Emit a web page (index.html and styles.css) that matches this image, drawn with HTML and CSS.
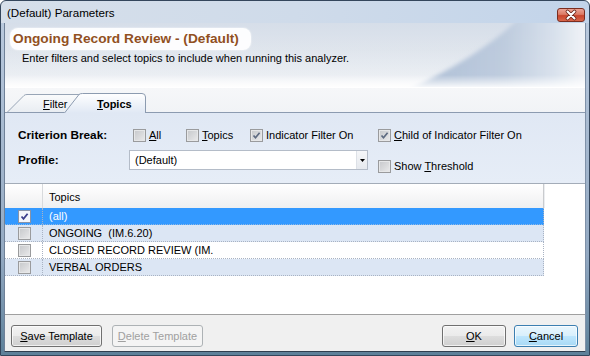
FILE: index.html
```html
<!DOCTYPE html>
<html>
<head>
<meta charset="utf-8">
<title>(Default) Parameters</title>
<link rel="stylesheet" href="styles.css">
</head>
<body>
<div class="window">
  <div class="titlebar">
    <span class="title">(Default) Parameters</span>
    <span class="close">
      <svg width="28" height="14" viewBox="0 0 28 14">
        <path d="M10.5,3.5 L17.5,10.5 M17.5,3.5 L10.5,10.5" stroke="#6a2418" stroke-width="3.8" stroke-linecap="round"/>
        <path d="M10.5,3.5 L17.5,10.5 M17.5,3.5 L10.5,10.5" stroke="#ffffff" stroke-width="2.1" stroke-linecap="round"/>
      </svg>
    </span>
  </div>
  <div class="frame">
    <div class="client">
      <div class="header">
        <svg class="swoosh" width="580" height="65" viewBox="0 0 580 65">
          <defs>
            <linearGradient id="sw" gradientUnits="userSpaceOnUse" x1="430" y1="0" x2="580" y2="0">
              <stop offset="0" stop-color="#aebfd6"/>
              <stop offset="0.45" stop-color="#bccadd"/>
              <stop offset="0.8" stop-color="#d8e1ec"/>
              <stop offset="1" stop-color="#f0f3f7"/>
            </linearGradient>
            <linearGradient id="fade" x1="0" y1="0" x2="0" y2="1">
              <stop offset="0" stop-color="#ffffff" stop-opacity="0"/>
              <stop offset="0.8" stop-color="#ffffff" stop-opacity="0.05"/>
              <stop offset="1" stop-color="#ffffff" stop-opacity="0.95"/>
            </linearGradient>
            <filter id="soft" filterUnits="userSpaceOnUse" x="380" y="-10" width="220" height="90">
              <feGaussianBlur stdDeviation="2"/>
            </filter>
          </defs>
          <path d="M402,68 C447,46 487,22 513,-4 L600,-4 L600,68 Z" fill="url(#sw)" filter="url(#soft)"/>
          <rect x="0" y="0" width="580" height="65" fill="url(#fade)"/>
        </svg>
        <div class="pill">Ongoing Record Review - (Default)</div>
        <div class="desc">Enter filters and select topics to include when running this analyzer.</div>
      </div>
      <div class="tabstrip">
        <div class="tab tab-filter">
          <svg class="tabshape" width="73" height="18" viewBox="0 0 73 18">
            <defs>
              <linearGradient id="tf" x1="0" y1="0" x2="0" y2="1">
                <stop offset="0" stop-color="#fafbfc"/>
                <stop offset="1" stop-color="#e9edf2"/>
              </linearGradient>
            </defs>
            <path d="M0,18 L17,1.5 Q18,0.5 20,0.5 L73,0.5 L73,18 Z" fill="url(#tf)"/>
            <path d="M0.5,18 L17,1.5 Q18,0.5 20,0.5 L73,0.5" fill="none" stroke="#98a5b6"/>
          </svg>
          <span class="tablabel"><u>F</u>ilter</span>
        </div>
        <div class="tab tab-topics">
          <svg class="tabshape" width="82" height="20" viewBox="0 0 82 20">
            <defs>
              <linearGradient id="tt" x1="0" y1="0" x2="0" y2="1">
                <stop offset="0" stop-color="#ffffff"/>
                <stop offset="1" stop-color="#e0e8f4"/>
              </linearGradient>
            </defs>
            <path d="M0,20 L15,1.5 Q16,0.5 18.5,0.5 L78,0.5 Q81.5,0.5 81.5,4 L81.5,20 Z" fill="url(#tt)"/>
            <path d="M0.5,20 L15,1.5 Q16,0.5 18.5,0.5 L78,0.5 Q81.5,0.5 81.5,4 L81.5,20" fill="none" stroke="#8c9bb0"/>
          </svg>
          <span class="tablabel bold"><u>T</u>opics</span>
        </div>
      </div>
      <div class="filters">
        <div class="flabel">Criterion Break:</div>
        <div class="fmid">
          <span class="cbitem w-all"><span class="cb"></span><span><u>A</u>ll</span></span>
          <span class="cbitem w-topics"><span class="cb"></span><span><u>T</u>opics</span></span>
          <span class="cbitem"><span class="cb"><svg width="11" height="11" viewBox="0 0 11 11"><path d="M2.5,5.5 L4.5,7.8 L8.6,2.8" fill="none" stroke="#5d6a80" stroke-width="1.7"/></svg></span><span>Indicator Filter On</span></span>
        </div>
        <div class="fright">
          <span class="cbitem"><span class="cb"><svg width="11" height="11" viewBox="0 0 11 11"><path d="M2.5,5.5 L4.5,7.8 L8.6,2.8" fill="none" stroke="#5d6a80" stroke-width="1.7"/></svg></span><span><u>C</u>hild of Indicator Filter On</span></span>
        </div>
        <div class="flabel">Profile:</div>
        <div class="fmid">
          <div class="combo">
            <span class="combotext">(Default)</span>
            <span class="combobtn"><svg width="5" height="3" viewBox="0 0 5 3"><path d="M0,0 L5,0 L2.5,3 Z" fill="#000"/></svg></span>
          </div>
        </div>
        <div class="fright low">
          <span class="cbitem"><span class="cb"></span><span>Show <u>T</u>hreshold</span></span>
        </div>
      </div>
      <div class="grid">
        <div class="ghead">
          <div class="gc1"></div>
          <div class="gc2">Topics</div>
        </div>
        <div class="grow sel">
          <div class="gc1"><span class="cb white"><svg width="11" height="11" viewBox="0 0 11 11"><path d="M2.5,5.5 L4.5,7.8 L8.6,2.8" fill="none" stroke="#3d3f8c" stroke-width="1.8"/></svg></span></div>
          <div class="gc2">(all)</div>
        </div>
        <div class="grow alt">
          <div class="gc1"><span class="cb"></span></div>
          <div class="gc2">ONGOING&nbsp; (IM.6.20)</div>
        </div>
        <div class="grow">
          <div class="gc1"><span class="cb"></span></div>
          <div class="gc2">CLOSED RECORD REVIEW (IM.</div>
        </div>
        <div class="grow alt">
          <div class="gc1"><span class="cb"></span></div>
          <div class="gc2">VERBAL ORDERS</div>
        </div>
      </div>
      <div class="footer">
        <button class="btn wide"><u>S</u>ave Template</button>
        <button class="btn wide disabled"><u>D</u>elete Template</button>
        <span class="spacer"></span>
        <button class="btn small"><u>O</u>K</button>
        <button class="btn small def"><u>C</u>ancel</button>
      </div>
    </div>
  </div>
</div>
</body>
</html>
```

FILE: styles.css
```css
* { box-sizing: border-box; }
html, body { margin: 0; padding: 0; }
body {
  width: 590px;
  height: 356px;
  overflow: hidden;
  font-family: "Liberation Sans", Arial, sans-serif;
  font-size: 11px;
  color: #000;
  background: #ffffff;
}
u { text-decoration: underline; text-underline-offset: 1px; }

.window {
  width: 590px;
  height: 356px;
  border: 1px solid #34465c;
  border-radius: 6px 6px 0 0;
  background: linear-gradient(to right, #d6dfea 0%, #cfdbea 50%, #c2d4ea 100%);
  display: flex;
  flex-direction: column;
  overflow: hidden;
}

.titlebar {
  height: 22px;
  display: flex;
  align-items: center;
  justify-content: space-between;
  padding: 0 4px 0 6px;
  flex: none;
}
.title {
  font-size: 11.6px;
  color: #000;
  margin-top: 1px;
}
.close {
  width: 28px;
  height: 14px;
  margin-top: 5px;
  border: 1px solid #7b2d1f;
  border-radius: 3px;
  background: linear-gradient(#eba395 0%, #dc7a64 45%, #c9452c 55%, #d8664a 100%);
  display: flex;
  align-items: center;
  justify-content: center;
}
.close svg { display: block; margin: -1px; }

.frame {
  flex: 1;
  padding: 0 3px 3px 3px;
  display: flex;
  background: linear-gradient(to bottom, #b9c9dd 0%, #93a9c2 70%, #5d8099 100%);
}
.client {
  flex: 1;
  display: flex;
  flex-direction: column;
  border-left: 1px solid #6f8198;
  border-right: 1px solid #7f91a8;
  border-bottom: 1px solid #2f3e4f;
  background: #ffffff;
  overflow: hidden;
}

/* header */
.header {
  position: relative;
  height: 65px;
  flex: none;
  background: linear-gradient(to bottom, #d6dee9 0%, #dfe5ed 45%, #e9edf2 80%, #f6f7f9 100%);
  border-bottom: 1px solid #ffffff;
  overflow: hidden;
}
.swoosh { position: absolute; left: 0; top: 0; }
.pill {
  position: relative;
  margin: 5px 0 0 5px;
  width: 241px;
  height: 22px;
  border-radius: 8px;
  background: rgba(255, 255, 255, 0.92);
  box-shadow: 0 0 2px rgba(255, 255, 255, 0.9);
  padding-left: 3px;
  font-weight: bold;
  font-size: 13.7px;
  line-height: 22px;
  color: #91501f;
  white-space: nowrap;
}
.desc {
  position: relative;
  margin: 2px 0 0 17px;
  line-height: 13px;
  white-space: nowrap;
}

/* tabs */
.tabstrip {
  height: 25px;
  flex: none;
  display: flex;
  align-items: flex-end;
  padding-left: 2px;
  background: linear-gradient(to bottom, #f6f7f9, #f1f3f6);
  border-bottom: 1px solid #8c9bb0;
}
.tab {
  position: relative;
  display: flex;
  align-items: center;
}
.tabshape { position: absolute; left: 0; top: 0; }
.tablabel { position: relative; white-space: nowrap; }
.tab-filter {
  width: 73px;
  height: 18px;
  padding-left: 36px;
}
.tab-filter .tablabel { margin-top: 1px; }
.tab-topics {
  width: 82px;
  height: 20px;
  margin-left: -16px;
  margin-bottom: -1px;
  padding-left: 33px;
  z-index: 1;
}
.tab-topics .tablabel { margin-top: 2px; }
.bold { font-weight: bold; }

/* filters */
.filters {
  height: 70px;
  flex: none;
  display: grid;
  grid-template-columns: 111px 249px 1fr;
  grid-template-rows: 20px 20px;
  row-gap: 5px;
  align-items: center;
  padding: 12px 0 0 13px;
  background: linear-gradient(to bottom, #e0e8f4, #e6edf7);
}
.flabel {
  font-weight: bold;
  font-size: 11.8px;
  white-space: nowrap;
}
.fmid {
  display: flex;
  align-items: center;
  height: 20px;
}
.fmid .cbitem:first-child { margin-left: 4px; }
.fright { display: flex; align-items: center; height: 20px; }
.fright.low { align-items: flex-start; padding-top: 10px; }
.cbitem {
  display: inline-flex;
  align-items: center;
  gap: 3px;
  white-space: nowrap;
  line-height: 13px;
}
.w-all { width: 53px; }
.w-topics { width: 64px; }

.cb {
  width: 13px;
  height: 13px;
  flex: none;
  border: 1px solid #9a9b9d;
  background: linear-gradient(135deg, #c6c8cb 0%, #d9dadc 55%, #ebebec 100%);
  box-shadow: inset 0 0 0 1px #e6e7e8;
  display: inline-flex;
  align-items: center;
  justify-content: center;
}
.cb svg { display: block; }
.cb.white {
  background: #f4f6fb;
  border-color: #8893a8;
  box-shadow: none;
}

.combo {
  width: 239px;
  height: 20px;
  border: 1px solid #b4bcc8;
  background: #ffffff;
  display: flex;
  align-items: center;
}
.combotext { flex: 1; padding-left: 5px; }
.combobtn {
  width: 11px;
  height: 18px;
  display: flex;
  align-items: center;
  justify-content: center;
  background: linear-gradient(to bottom, #f5f6f8, #e6e9ee);
  border-left: 1px solid #dde1e7;
}
.combobtn svg { display: block; }

/* grid */
.grid {
  height: 131px;
  flex: none;
  border-top: 1px solid #a3acb8;
  background: #ffffff;
}
.ghead {
  width: 539px;
  height: 24px;
  display: flex;
  background: linear-gradient(to bottom, #ffffff 0%, #f7f7f8 50%, #eeeff1 100%);
  border-right: 1px solid #c9cbce;
  box-shadow: 1px 0 0 #ebedf0;
}
.ghead .gc1 {
  width: 38px;
  border-right: 1px solid #d8dadd;
}
.ghead .gc2 {
  flex: 1;
  padding-left: 6px;
  display: flex;
  align-items: center;
  padding-top: 1px;
}
.grow {
  width: 539px;
  height: 17px;
  display: flex;
  border-bottom: 1px dotted #a9b3c3;
  border-right: 1px dotted #a9b3c3;
}
.grow.alt { background: #dce6f4; }
.grow.sel { background: #3399ff; color: #ffffff; border-bottom-color: #8fb9e6; }
.grow .gc1 {
  width: 38px;
  display: flex;
  align-items: center;
  justify-content: center;
  border-right: 1px dotted #a9b3c3;
  padding-left: 1px;
}
.grow .gc2 {
  flex: 1;
  padding-left: 6px;
  display: flex;
  align-items: center;
  white-space: nowrap;
}

/* footer */
.footer {
  flex: 1;
  display: flex;
  align-items: flex-start;
  gap: 10px;
  padding: 10px 7px 0 6px;
  background: #f0f0f0;
  border-top: 1px solid #a0a0a0;
}
.spacer { flex: 1; }
.btn {
  height: 22px;
  padding: 0;
  border: 1px solid #707070;
  border-radius: 3px;
  background: linear-gradient(to bottom, #f2f2f2 0%, #ebebeb 48%, #dddddd 52%, #cfcfcf 100%);
  font-family: "Liberation Sans", Arial, sans-serif;
  font-size: 11px;
  color: #000;
  text-align: center;
  box-shadow: inset 0 0 0 1px rgba(255,255,255,0.7);
}
.btn.wide { width: 91px; }
.btn.small { width: 64px; }
.footer .btn.small + .btn.small { margin-left: -2px; }
.btn.disabled {
  border-color: #adb2b5;
  background: #f4f4f4;
  color: #a0a0a0;
  box-shadow: none;
}
.btn.def {
  border-color: #3c7fb1;
  background: linear-gradient(to bottom, #eaf6fd 0%, #d9f0fc 48%, #bee6fd 52%, #a7d9f5 100%);
}
```
